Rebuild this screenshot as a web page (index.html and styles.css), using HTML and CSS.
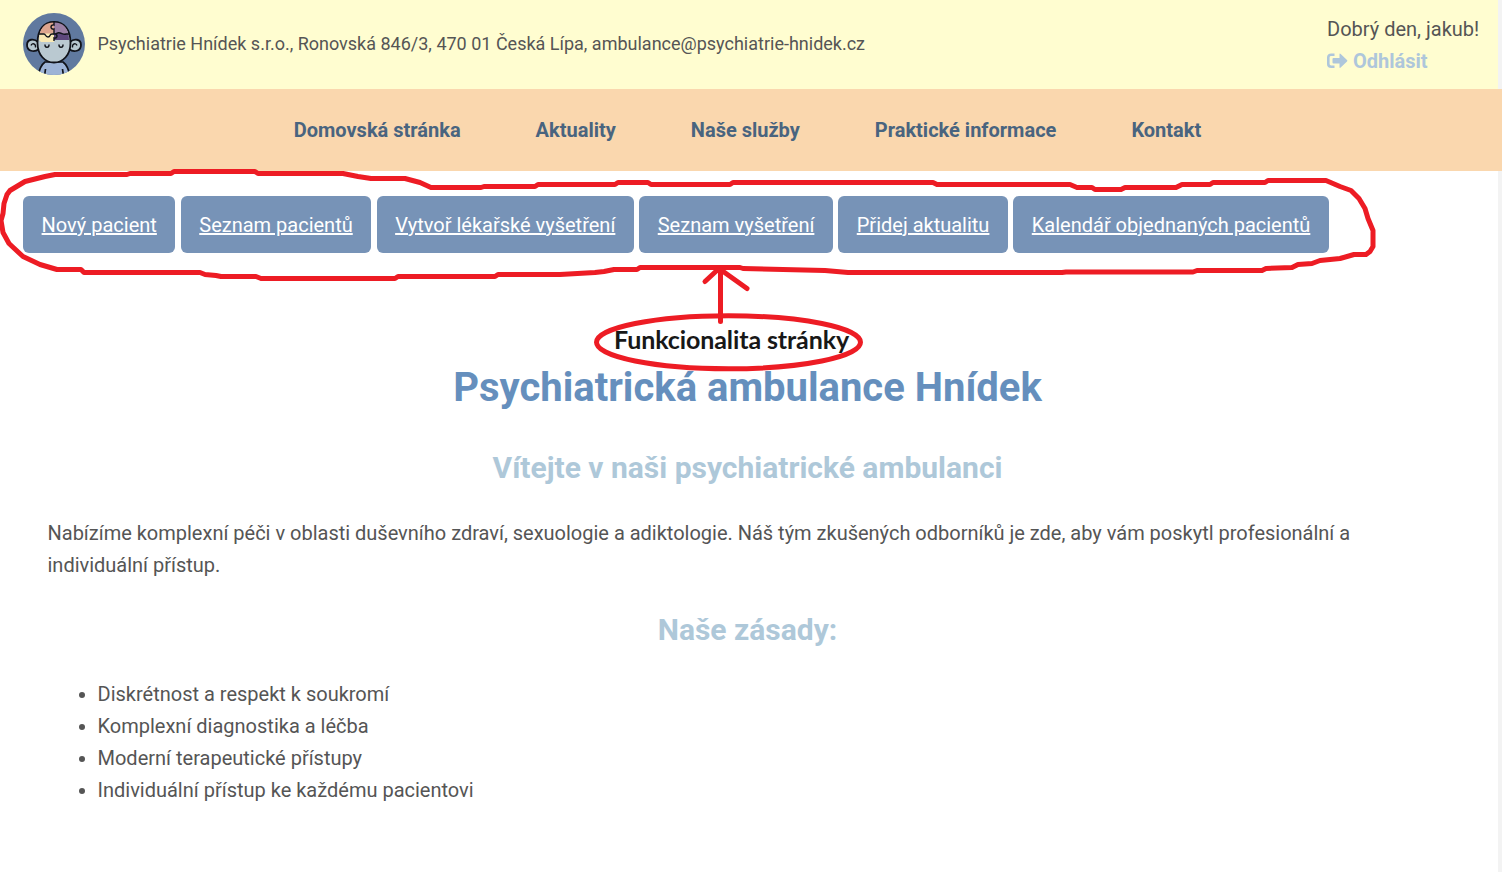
FILE: index.html
```html
<!DOCTYPE html>
<html lang="cs">
<head>
<meta charset="utf-8">
<title>Psychiatrická ambulance Hnídek</title>
<link rel="stylesheet" href="styles.css">
</head>
<body>
<header class="topbar">
  <div class="brand">
    <svg class="logo" viewBox="0 0 62 62" aria-hidden="true">
      <defs>
        <clipPath id="disc"><circle cx="31" cy="31" r="31"/></clipPath>
        <clipPath id="brain"><path d="M16 27C16 15 22 9.500 31 9.500S46 15 46 27L44 29H18z"/></clipPath>
      </defs>
      <g clip-path="url(#disc)">
        <rect width="62" height="62" fill="#60799f"/>
        <path d="M15 64c1-7 3-12 7-15h18c4 3 6 8 7 15z" fill="#9db3d6" stroke="#11131a" stroke-width="1.700"/>
        <path d="M21.500 63l1-7M40.500 63l-1-7" stroke="#11131a" stroke-width="1.700"/>
        <path d="M15 29c-4-4-11-3-11 3s7 8 12 4M47 29c4-4 11-3 11 3s-7 8-12 4" fill="#b7c7d0" stroke="#11131a" stroke-width="1.800"/>
        <path d="M12.500 34.500c.5-4-3.500-5-4.500-2M49.500 34.500c-.5-4 3.500-5 4.500-2" fill="none" stroke="#11131a" stroke-width="1.300"/>
        <path d="M14.500 30C14.500 16 21 9 31 9S47.500 16 47.500 30C47.500 42 40 49.500 31 49.500S14.500 42 14.500 30z" fill="#bac9d1" stroke="#11131a" stroke-width="1.800"/>
        <g clip-path="url(#brain)">
          <path d="M14 9h17v12H14z" fill="#dda58e"/>
          <path d="M31 9h17v13H31z" fill="#9a7fa4"/>
          <path d="M14 20.500h17V30H14z" fill="#f9e9b4"/>
          <path d="M31 21c5-2 10 1 17 0v6H31z" fill="#5d477c"/>
        </g>
        <path d="M16 21h5c2 0 1 3 4 3s1-3 4-3h2M31 21c3 0 3-2 6-1s4 2 6 1h3M31 9v3c-4-1-4 5 0 4v5c4-1 4 5 0 4v3" fill="none" stroke="#11131a" stroke-width="1.400"/>
        <path d="M22 32c0 3 4 3 4 0M36 32c0 3 4 3 4 0" fill="none" stroke="#11131a" stroke-width="1.400" stroke-linecap="round"/>
      </g>
    </svg>
    <span class="address">Psychiatrie Hnídek s.r.o., Ronovská 846/3, 470 01 Česká Lípa, ambulance@psychiatrie-hnidek.cz</span>
  </div>
  <div class="user">
    <span>Dobrý den, jakub!</span>
    <a class="logout"><svg class="logout-icon" viewBox="0 0 21 16" aria-hidden="true"><path d="M7.500 1.800H4.200Q1.300 1.800 1.300 4.500v6.500Q1.300 13.700 4.200 13.700h3.300" fill="none" stroke="currentColor" stroke-width="2.600"/><path d="M6.500 5h6V1.500q0-1.500 1.200-.5l6.300 6q.8.800 0 1.600l-6.300 6q-1.200 1-1.200-.5V10.500h-6q-1 0-1-1V6q0-1 1-1z" fill="currentColor"/></svg>Odhlásit</a>
  </div>
</header>
<nav class="nav">
  <a>Domovská stránka</a><a>Aktuality</a><a>Naše služby</a><a>Praktické informace</a><a>Kontakt</a>
</nav>
<div class="actions">
  <a>Nový pacient</a><a>Seznam pacientů</a><a>Vytvoř lékařské vyšetření</a><a>Seznam vyšetření</a><a>Přidej aktualitu</a><a>Kalendář objednaných pacientů</a>
</div>
<main class="content">
  <h1>Psychiatrická ambulance Hnídek</h1>
  <h2>Vítejte v naši psychiatrické ambulanci</h2>
  <p>Nabízíme komplexní péči v oblasti duševního zdraví, sexuologie a adiktologie. Náš tým zkušených odborníků je zde, aby vám poskytl profesionální a individuální přístup.</p>
  <h2>Naše zásady:</h2>
  <ul>
    <li>Diskrétnost a respekt k soukromí</li>
    <li>Komplexní diagnostika a léčba</li>
    <li>Moderní terapeutické přístupy</li>
    <li>Individuální přístup ke každému pacientovi</li>
  </ul>
</main>
<span class="note">Funkcionalita stránky</span>
<svg class="markup" viewBox="0 0 1502 872" aria-hidden="true">
  <g transform="translate(0 .5)">
  <path d="M3 213L4 203 7 194 10 190 25 181 45 176 55 174H127L130 173H171L174 171H255L258 173H343L358 176 371 178H405L420 182 431 187H481L484 186H535L538 184H615L618 182H648L651 184H730L733 182H933L937 184H1070L1077 187H1092L1095 189H1121L1125 187H1176L1182 184H1210L1213 182H1265L1268 180H1326L1340 186 1351 190 1359 198 1365 208 1368 218 1373 230V246L1370 251 1366 254H1354L1340 258 1320 260 1312 263 1298 264 1292 267 1266 268 1262 270H1197L1193 271.500H1066L1062 272H848L825 270 743 268 740 267H640L637 269H614L604 271 595 272 560 274H498L495 276H398L395 278H261L256 276H221L216 275 205 274 200 272H84L81 269H57L40 264 23 256 9 243 3 232 1 220z"/>
  <path d="M720.500 321V269M705 281L719 268 747 288"/>
  <ellipse cx="728.500" cy="341.800" rx="132" ry="26.500"/>
  </g>
</svg>
</body>
</html>
```
FILE: styles.css
```css
* { box-sizing: border-box; }
body {
  margin: 0;
  height: 872px;
  overflow: hidden;
  background: linear-gradient(to right, #fff 1498px, #f3f3f3 1498px);
  color: #555;
  font: 20px/32px Roboto, "Liberation Sans", sans-serif;
}
.topbar {
  width: 1498px;
  height: 89px;
  padding: 0 19px 0 23px;
  display: flex;
  justify-content: space-between;
  align-items: center;
  background: #fffdd0;
}
.brand { display: flex; align-items: center; gap: 12.4px; padding-bottom: 1px; }
.logo { width: 62px; height: 62px; }
.address { font-size: 18px; }
.user { width: 152px; display: flex; flex-direction: column; white-space: nowrap; }
.logout {
  display: flex;
  align-items: center;
  gap: 5px;
  color: #aec6db;
  font-weight: bold;
}
.logout-icon { width: 21px; height: 16px; }
.nav {
  height: 82px;
  padding-right: 7px;
  display: flex;
  justify-content: center;
  align-items: center;
  gap: 75px;
  background: #fad7ae;
  color: #49647f;
  font-weight: bold;
}
.actions { display: flex; gap: 5.2px; padding: 25px 23px 0; }
.actions a {
  height: 57px;
  padding: 0 18.6px;
  border-radius: 6px;
  background: #7793b7;
  color: #fff;
  line-height: 58px;
  text-decoration: underline;
  white-space: nowrap;
}
.content { width: 1495px; padding: 103px 47.5px 0; }
h1 {
  margin: 0;
  color: #658fbd;
  font-size: 40px;
  line-height: 64px;
  text-align: center;
}
h2 {
  margin: 24px 0 25px;
  color: #aec8d9;
  font-size: 30px;
  line-height: 48px;
  text-align: center;
}
p { margin: 0; letter-spacing: -0.008px; }
p + h2 { margin: 25px 0 24px; }
ul { margin: 0; padding-left: 50px; }
.note {
  position: absolute;
  left: 614px;
  top: 323px;
  color: #181818;
  font: bold 25px/32px Lato, sans-serif;
  letter-spacing: -0.1px;
  white-space: nowrap;
}
.markup {
  position: absolute;
  left: 0;
  top: 0;
  width: 1502px;
  height: 872px;
  fill: none;
  stroke: #ed1c24;
  stroke-width: 5;
  stroke-linejoin: round;
  stroke-linecap: round;
}
```
